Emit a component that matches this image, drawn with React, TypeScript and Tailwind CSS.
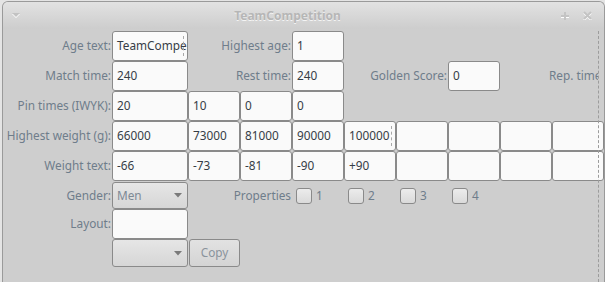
import React from "react";

const LABEL = "text-[#6f7d8b]";

type CellProps = {
  value?: string;
  wide?: boolean;
  clipped?: boolean;
};

function Cell({ value = "", wide = false, clipped = false }: CellProps) {
  return (
    <div
      className={`relative flex h-[30px] shrink-0 items-center overflow-hidden whitespace-nowrap rounded-[3px] border border-[#8a8a8a] bg-[#fafafa] pl-[4px] text-[#363d46] ${
        wide ? "w-[76px]" : "w-[52px]"
      }`}
    >
      {value}
      {clipped && (
        <span className="absolute top-[4px] bottom-[4px] right-[3px] border-r border-dashed border-[#a8a8a8]" />
      )}
    </div>
  );
}

function Label({ text, w = "w-[109px]" }: { text: string; w?: string }) {
  return (
    <div className={`${w} shrink-0 pr-px text-right whitespace-nowrap ${LABEL}`}>
      {text}
    </div>
  );
}

function Combo({ value = "" }: { value?: string }) {
  return (
    <div className="flex h-full w-[76px] shrink-0 items-center justify-between rounded-[3px] border border-[#8a8a8a] bg-linear-to-b from-[#e6e6e6] to-[#d6d6d6] pl-[4px] pr-[5px] text-[#7d8995]">
      <span>{value}</span>
      <svg width="8" height="5" viewBox="0 0 8 5">
        <path d="M0 0 H8 L4 4.5 Z" fill="#7a7a7a" />
      </svg>
    </div>
  );
}

function CheckItem({ n }: { n: string }) {
  return (
    <div className="flex w-[52px] shrink-0 items-center gap-[4px] pl-[4px]">
      <div className="h-[16px] w-[16px] rounded-[3px] border border-[#8a8a8a] bg-linear-to-b from-[#ececec] to-[#dadada]" />
      <span className={LABEL}>{n}</span>
    </div>
  );
}

const WEIGHTS = ["66000", "73000", "81000", "90000", "100000", "", "", "", ""];
const WEIGHT_TEXT = ["-66", "-73", "-81", "-90", "+90", "", "", "", ""];

export default function App() {
  return (
    <div
      className="h-[282px] w-[605px] overflow-hidden bg-[#e4e4e4] pl-[2px] pt-px text-[11.8px]"
      style={{ fontFamily: '"Noto Sans", "Open Sans", sans-serif' }}
    >
      <div className="relative h-[281px] w-[603px] overflow-hidden rounded-t-[6px] border-x border-t border-[#9a9a9a] bg-[#cecece]">
        {/* title bar */}
        <div className="relative flex h-[27px] items-center bg-linear-to-b from-[#e2e2e2] to-[#cdcdcd] pl-[9px] pr-[8px]">
          <svg width="8" height="6" viewBox="0 0 8 6" className="mt-[1px]">
            <path d="M0 1 H8 L4 5 Z" fill="#ffffff" />
            <path d="M0 0 H8 L4 4 Z" fill="#c2c2c2" />
          </svg>
          <div className="flex flex-1 justify-center pr-[6px]">
            <span className="font-bold text-[12px] text-[#b6b6b6] [text-shadow:0_1px_0_#f4f4f4]">
              TeamCompetition
            </span>
          </div>
          <div className="flex items-center gap-[14px] pr-[4px]">
            <svg width="8" height="8" viewBox="0 0 8 8">
              <path d="M4 0 V8 M0 4 H8" stroke="#ffffff" strokeWidth="2" transform="translate(0 1)" />
              <path d="M4 0 V8 M0 4 H8" stroke="#c4c4c4" strokeWidth="2" />
            </svg>
            <svg width="9" height="9" viewBox="0 0 9 9">
              <path d="M1 1 L8 8 M8 1 L1 8" stroke="#ffffff" strokeWidth="2" transform="translate(0 1)" />
              <path d="M1 1 L8 8 M8 1 L1 8" stroke="#c4c4c4" strokeWidth="2" />
            </svg>
          </div>
        </div>

        {/* form */}
        <div className="flex flex-col pt-[2px]">
          <div className="flex h-[30px] items-center">
            <Label text="Age text:" />
            <Cell value="TeamCompe" wide clipped />
            <Label text="Highest age:" w="w-[104px]" />
            <Cell value="1" />
          </div>
          <div className="flex h-[30px] items-center">
            <Label text="Match time:" />
            <Cell value="240" wide />
            <Label text="Rest time:" w="w-[104px]" />
            <Cell value="240" />
            <Label text="Golden Score:" w="w-[104px]" />
            <Cell value="0" />
            <div className={`w-[98px] shrink-0 overflow-hidden pl-[49px] whitespace-nowrap ${LABEL}`}>
              Rep. time:
            </div>
          </div>
          <div className="flex h-[30px] items-center">
            <Label text="Pin times (IWYK):" />
            <Cell value="20" wide />
            <Cell value="10" />
            <Cell value="0" />
            <Cell value="0" />
          </div>
          <div className="flex h-[30px] items-center">
            <Label text="Highest weight (g):" />
            {WEIGHTS.map((v, i) => (
              <Cell key={i} value={v} wide={i === 0} clipped={v === "100000"} />
            ))}
          </div>
          <div className="flex h-[30px] items-center">
            <Label text="Weight text:" />
            {WEIGHT_TEXT.map((v, i) => (
              <Cell key={i} value={v} wide={i === 0} />
            ))}
          </div>
          <div className="flex h-[28px] items-center pt-[1px]">
            <Label text="Gender:" />
            <div className="h-[27px]">
              <Combo value="Men" />
            </div>
            <Label text="Properties" w="w-[104px]" />
            <CheckItem n="1" />
            <CheckItem n="2" />
            <CheckItem n="3" />
            <CheckItem n="4" />
          </div>
          <div className="flex h-[30px] items-center">
            <Label text="Layout:" />
            <Cell wide />
          </div>
          <div className="flex h-[28px] items-stretch">
            <div className="w-[109px] shrink-0" />
            <Combo />
            <div className="ml-px flex w-[51px] items-center justify-center rounded-[3px] border border-[#8a8a8a] bg-linear-to-b from-[#e2e2e2] to-[#d4d4d4] text-[#8a939c]">
              Copy
            </div>
          </div>
        </div>

        {/* scroll area edge */}
        <div className="absolute top-[29px] bottom-0 left-[595px] border-l border-dashed border-[#9c9c9c]" />
      </div>
    </div>
  );
}
